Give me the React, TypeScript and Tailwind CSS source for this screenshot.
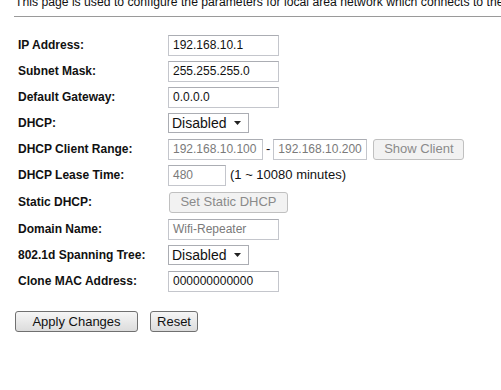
const font = { fontFamily: '"Liberation Sans", Arial, sans-serif' };

function Label({ children }: { children: React.ReactNode }) {
  return <div className="w-[150px] shrink-0 text-[12px] font-bold text-[#111]">{children}</div>;
}

function Input({ value, w = "w-[111px]", disabled = false }: { value: string; w?: string; disabled?: boolean }) {
  return (
    <div
      className={`${w} flex h-[21px] items-center overflow-hidden whitespace-nowrap border border-[#c4c6cc] border-t-[#abadb3] bg-white px-[4px] text-[12px] ${
        disabled ? "text-[#7a7a7a]" : "text-[#111]"
      }`}
    >
      {value}
    </div>
  );
}

function Select({ value }: { value: string }) {
  return (
    <div className="flex h-[20px] w-[81px] items-center justify-between border border-[#abadb3] bg-white pl-[3px] pr-[7px] text-[14px] text-[#111]">
      <span>{value}</span>
      <svg width="7" height="4" viewBox="0 0 7 4">
        <path d="M0 0h7L3.5 4z" fill="#222" />
      </svg>
    </div>
  );
}

function Btn({ children, w, disabled = false }: { children: React.ReactNode; w: string; disabled?: boolean }) {
  return (
    <div
      className={`${w} flex h-[21px] items-center justify-center rounded-[3px] border text-[13px] ${
        disabled
          ? "border-[#c0c0c0] bg-[#f2f2f2] text-[#8a8a8a]"
          : "border-[#707070] bg-gradient-to-b from-[#f6f6f6] to-[#dcdcdc] text-[#111]"
      }`}
    >
      {children}
    </div>
  );
}

function Row({ label, children, h = "h-[26px]" }: { label: string; children: React.ReactNode; h?: string }) {
  return (
    <div className={`flex ${h} items-center`}>
      <Label>{label}</Label>
      <div className="flex items-center">{children}</div>
    </div>
  );
}

export default function App() {
  return (
    <div className="h-[390px] w-[501px] overflow-hidden bg-white" style={font}>
      <div className="-mt-[5px] overflow-hidden whitespace-nowrap pl-[15px] text-[12.2px] leading-[15px] text-[#111]">
        This page is used to configure the parameters for local area network which connects to the LAN port of
      </div>
      <div className="ml-[14px] mt-[6px] border-t border-[#9a9a9a]" />

      <div className="mt-[15px] pl-[18px]">
        <Row label="IP Address:">
          <Input value="192.168.10.1" />
        </Row>
        <Row label="Subnet Mask:">
          <Input value="255.255.255.0" />
        </Row>
        <Row label="Default Gateway:">
          <Input value="0.0.0.0" />
        </Row>
        <Row label="DHCP:">
          <Select value="Disabled" />
        </Row>
        <Row label="DHCP Client Range:">
          <Input value="192.168.10.100" w="w-[95px]" disabled />
          <span className="mx-[3px] text-[13px] text-[#111]">-</span>
          <Input value="192.168.10.200" w="w-[94px]" disabled />
          <div className="ml-[6px]">
            <Btn w="w-[91px]" disabled>
              Show Client
            </Btn>
          </div>
        </Row>
        <Row label="DHCP Lease Time:">
          <Input value="480" w="w-[58px]" disabled />
          <span className="ml-[4px] text-[13px] text-[#111]">(1 ~ 10080 minutes)</span>
        </Row>
        <Row label="Static DHCP:" h="h-[28px]">
          <div className="ml-[1px]">
            <Btn w="w-[119px]" disabled>
              Set Static DHCP
            </Btn>
          </div>
        </Row>
        <Row label="Domain Name:">
          <Input value="Wifi-Repeater" disabled />
        </Row>
        <Row label="802.1d Spanning Tree:">
          <Select value="Disabled" />
        </Row>
        <Row label="Clone MAC Address:">
          <Input value="000000000000" />
        </Row>
      </div>

      <div className="mt-[17px] flex gap-[12px] pl-[15px]">
        <Btn w="w-[123px]">Apply Changes</Btn>
        <Btn w="w-[48px]">Reset</Btn>
      </div>
    </div>
  );
}
